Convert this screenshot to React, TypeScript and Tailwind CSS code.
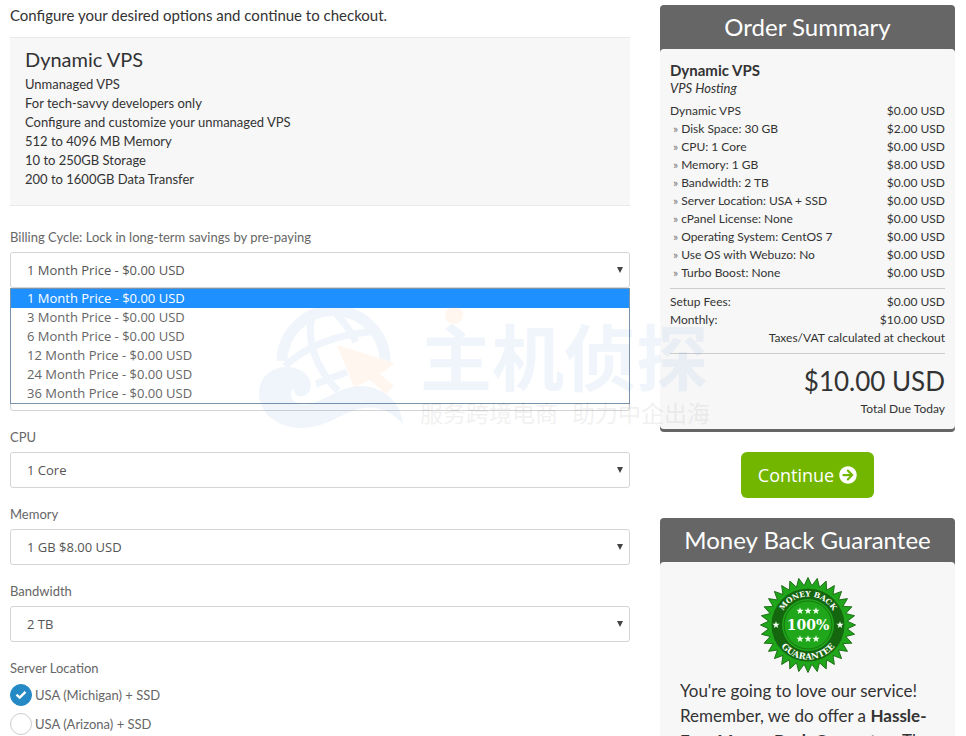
import { ReactNode, useId, useState } from "react";
import { FaArrowCircleRight } from "react-icons/fa";

const billingCycles = [
  "1 Month Price - $0.00 USD",
  "3 Month Price - $0.00 USD",
  "6 Month Price - $0.00 USD",
  "12 Month Price - $0.00 USD",
  "24 Month Price - $0.00 USD",
  "36 Month Price - $0.00 USD",
];

const features = [
  "Unmanaged VPS",
  "For tech-savvy developers only",
  "Configure and customize your unmanaged VPS",
  "512 to 4096 MB Memory",
  "10 to 250GB Storage",
  "200 to 1600GB Data Transfer",
];

const summaryOptions = [
  ["Disk Space: 30 GB", "$2.00 USD"],
  ["CPU: 1 Core", "$0.00 USD"],
  ["Memory: 1 GB", "$8.00 USD"],
  ["Bandwidth: 2 TB", "$0.00 USD"],
  ["Server Location: USA + SSD", "$0.00 USD"],
  ["cPanel License: None", "$0.00 USD"],
  ["Operating System: CentOS 7", "$0.00 USD"],
  ["Use OS with Webuzo: No", "$0.00 USD"],
  ["Turbo Boost: None", "$0.00 USD"],
];

function SelectField({ label, options, children }: { label: string; options: string[]; children?: ReactNode }) {
  const id = useId();
  return (
    <div>
      <label htmlFor={id} className="block text-[13px] leading-5 text-[#666]">
        {label}
      </label>
      <div className="relative mt-[5px]">
        <select
          id={id}
          className="block h-9 w-full appearance-none rounded-[3px] border border-[#d4d4d4] bg-white px-4 pt-0.5 font-['Open_Sans','Noto_Sans',sans-serif] text-[13px] text-[#555] outline-none"
        >
          {options.map((o) => (
            <option key={o}>{o}</option>
          ))}
        </select>
        <svg viewBox="0 0 6 6" className="pointer-events-none absolute top-[15px] right-[7px] size-1.5" aria-hidden="true">
          <path d="M0 0H6L3 6Z" fill="#444" />
        </svg>
        {children}
      </div>
    </div>
  );
}

function BillingList() {
  const [active, setActive] = useState(0);
  return (
    <ul
      role="listbox"
      aria-label="Billing Cycle"
      className="absolute top-full left-0 z-10 w-full border border-[#7893ab] bg-white font-['Open_Sans','Noto_Sans',sans-serif] text-[13px] leading-[19px] text-[#666]"
    >
      {billingCycles.map((c, i) => (
        <li
          key={c}
          role="option"
          aria-selected={i === active}
          onMouseEnter={() => setActive(i)}
          className={i === active ? "bg-[#1e90ff] px-4 text-white" : "px-4"}
        >
          {c}
        </li>
      ))}
    </ul>
  );
}

function LocationRadio({ label, checked }: { label: string; checked?: boolean }) {
  return (
    <label className="flex items-center gap-[3px] text-[13px] leading-[22px] text-[#666]">
      <span className="grid">
        <input
          type="radio"
          name="location"
          defaultChecked={checked}
          className="peer col-start-1 row-start-1 size-[22px] appearance-none rounded-full border border-[#ccc] bg-white checked:border-[#2489c5] checked:bg-[#2489c5]"
        />
        <svg
          viewBox="0 0 22 22"
          className="pointer-events-none col-start-1 row-start-1 hidden size-[22px] peer-checked:block"
          aria-hidden="true"
        >
          <path d="M6.5 10.700L9.700 13.700L15.500 7.900" fill="none" stroke="#fff" strokeWidth="2.4" />
        </svg>
      </span>
      {label}
    </label>
  );
}

function Row({ name, price, sub }: { name: string; price: string; sub?: boolean }) {
  return (
    <div className="flex justify-between">
      <dt className={sub ? "flex gap-[3px] pl-[3px]" : ""}>
        {sub && <span className="text-[#777]">»</span>}
        {name}
      </dt>
      <dd>{price}</dd>
    </div>
  );
}

function Panel({ title, children }: { title: string; children: ReactNode }) {
  return (
    <section className="rounded bg-[#666] pb-[3px]">
      <h2 className="text-center text-[24px] leading-[44px] text-white">{title}</h2>
      <div className="rounded bg-[#f7f7f7]">{children}</div>
    </section>
  );
}

function polygon(points: number, outer: number, inner: number, cx: number, cy: number) {
  return Array.from({ length: points * 2 }, (_, i) => {
    const r = i % 2 ? inner : outer;
    const a = (Math.PI * i) / points - Math.PI / 2;
    return `${(cx + r * Math.cos(a)).toFixed(2)},${(cy + r * Math.sin(a)).toFixed(2)}`;
  }).join(" ");
}

function Seal() {
  const stars = [
    [40, 34], [48, 34], [56, 34], [40, 62], [48, 62], [56, 62], [16, 48], [80, 48],
  ];
  return (
    <svg viewBox="0 0 96 96" className="mx-auto size-24" role="img" aria-label="100% money back guarantee">
      <defs>
        <path id="seal-top" d="M19.500 48A28.500 28.500 0 0 1 76.500 48" />
        <path id="seal-bottom" d="M13.500 48A34.500 34.500 0 0 0 82.500 48" />
      </defs>
      <polygon points={polygon(32, 47.5, 39.5, 48, 48)} fill="#1fa61a" stroke="#15670f" strokeWidth="0.9" />
      <circle cx="48" cy="48" r="36.500" fill="#15670f" />
      <circle cx="48" cy="48" r="26" fill="#1fa61a" />
      <circle cx="48" cy="48" r="24" fill="none" stroke="#15670f" strokeWidth="0.8" />
      {stars.map(([x, y]) => (
        <polygon key={`${x}-${y}`} points={polygon(5, 3.8, 1.6, x, y)} fill="#f2fff0" />
      ))}
      <g fill="#fff" fontFamily="'DejaVu Serif', serif" fontWeight="bold" textAnchor="middle">
        <text x="48" y="53" fontSize="14">100%</text>
        <text fontSize="7.5">
          <textPath href="#seal-top" startOffset="50%">MONEY BACK</textPath>
        </text>
        <text fontSize="8.5">
          <textPath href="#seal-bottom" startOffset="50%">GUARANTEE</textPath>
        </text>
      </g>
    </svg>
  );
}

function Watermark() {
  return (
    <div
      aria-hidden="true"
      className="pointer-events-none absolute top-[296px] left-[256px] z-20 flex gap-2 font-['Noto_Sans_CJK_SC',sans-serif] opacity-8"
    >
      <svg viewBox="0 0 156 136" className="h-[136px] w-[156px]">
        <path d="M26 65A49 49 0 1 1 129 67" fill="none" stroke="#4f8fdc" strokeWidth="11" />
        <path
          d="M75 12Q91 28 100 46M56 20C50 45 60 72 82 95M29 70Q62 40 114 36M60 88L91 76"
          fill="none"
          stroke="#4f8fdc"
          strokeWidth="7"
        />
        <path
          d="M3 98C3 79 18 70 32 71C49 72 58 84 54 94C49 104 36 101 38 92C30 99 38 113 57 107C77 100 86 90 105 90C129 91 145 107 147 128C132 112 118 109 102 113C80 120 70 132 43 132C20 131 3 116 3 98Z"
          fill="#4f8fdc"
        />
        <path d="M81 49L139 67L124 78L138 90L130 98L114 84L98 91Z" fill="#ff9b3d" />
      </svg>
      <div className="pt-[18px]">
        <div className="relative text-[72px] leading-[80px] font-bold text-[#4f8fdc]">
          主机侦探
          <span className="absolute -top-2 left-[25px] size-[18px] rounded-full bg-[#ff9b3d]" />
        </div>
        <div className="flex gap-3.5 text-[23px] leading-9 text-[#555]">
          <span>服务跨境电商</span>
          <span>助力中企出海</span>
        </div>
      </div>
    </div>
  );
}

export default function App() {
  return (
    <div className="relative h-screen overflow-hidden bg-white pr-[11px] pl-2.5 font-[Lato,'Noto_Sans',sans-serif] text-[#333]">
      <div className="flex items-start gap-[30px]">
        <main className="min-w-0 flex-1">
          <p className="pt-[3px] pb-2.5 text-[15px] leading-6">Configure your desired options and continue to checkout.</p>
          <section className="border-y border-[#e9e9e9] bg-[#f7f7f7] px-[15px] pt-[5px] pb-4">
            <h1 className="text-[20px] leading-8">Dynamic VPS</h1>
            {features.map((f) => (
              <p key={f} className="text-[13px] leading-[19px]">
                {f}
              </p>
            ))}
          </section>
          <form className="pt-[21px]">
            <SelectField label="Billing Cycle: Lock in long-term savings by pre-paying" options={billingCycles}>
              <BillingList />
            </SelectField>
            <div className="flex flex-col gap-4 pt-[62px]">
              <SelectField label="Disk Space" options={["30 GB"]} />
              <SelectField label="CPU" options={["1 Core"]} />
              <SelectField label="Memory" options={["1 GB $8.00 USD"]} />
              <SelectField label="Bandwidth" options={["2 TB"]} />
              <fieldset className="flex flex-col gap-[7px]">
                <legend className="mb-1.5 text-[13px] leading-5 text-[#666]">Server Location</legend>
                <LocationRadio label="USA (Michigan) + SSD" checked />
                <LocationRadio label="USA (Arizona) + SSD" />
              </fieldset>
            </div>
          </form>
        </main>
        <aside className="w-[295px] shrink-0 pt-[5px]">
          <Panel title="Order Summary">
            <div className="px-2.5 pt-3 pb-2.5 text-[12px] leading-[18px]">
              <h3 className="text-[15px] leading-[18px] font-bold">Dynamic VPS</h3>
              <p className="text-[13px] leading-[18px] italic">VPS Hosting</p>
              <dl className="pt-[5px] pb-1.5">
                <Row name="Dynamic VPS" price="$0.00 USD" />
                {summaryOptions.map(([name, price]) => (
                  <Row key={name} name={name} price={price} sub />
                ))}
              </dl>
              <dl className="border-t border-[#ccc] pt-1">
                <Row name="Setup Fees:" price="$0.00 USD" />
                <Row name="Monthly:" price="$10.00 USD" />
              </dl>
              <p className="border-b border-[#ccc] pb-1.5 text-right">Taxes/VAT calculated at checkout</p>
              <p className="pt-[9px] text-right text-[26px] leading-9">$10.00 USD</p>
              <p className="text-right leading-5">Total Due Today</p>
            </div>
          </Panel>
          <div className="flex justify-center py-5">
            <button
              type="button"
              className="flex h-[46px] items-center gap-[5px] rounded-md bg-[#72b600] px-[17px] font-['Open_Sans','Noto_Sans',sans-serif] text-[18px] text-white"
            >
              Continue <FaArrowCircleRight className="size-[18px]" />
            </button>
          </div>
          <Panel title="Money Back Guarantee">
            <div className="px-5 pt-[15px] pb-5">
              <Seal />
              <p className="pt-[5px] text-[17px] leading-[25px]">
                You're going to love our service! Remember, we do offer a <b>Hassle-Free Money Back Guarantee</b>. The
              </p>
            </div>
          </Panel>
        </aside>
      </div>
      <Watermark />
    </div>
  );
}
